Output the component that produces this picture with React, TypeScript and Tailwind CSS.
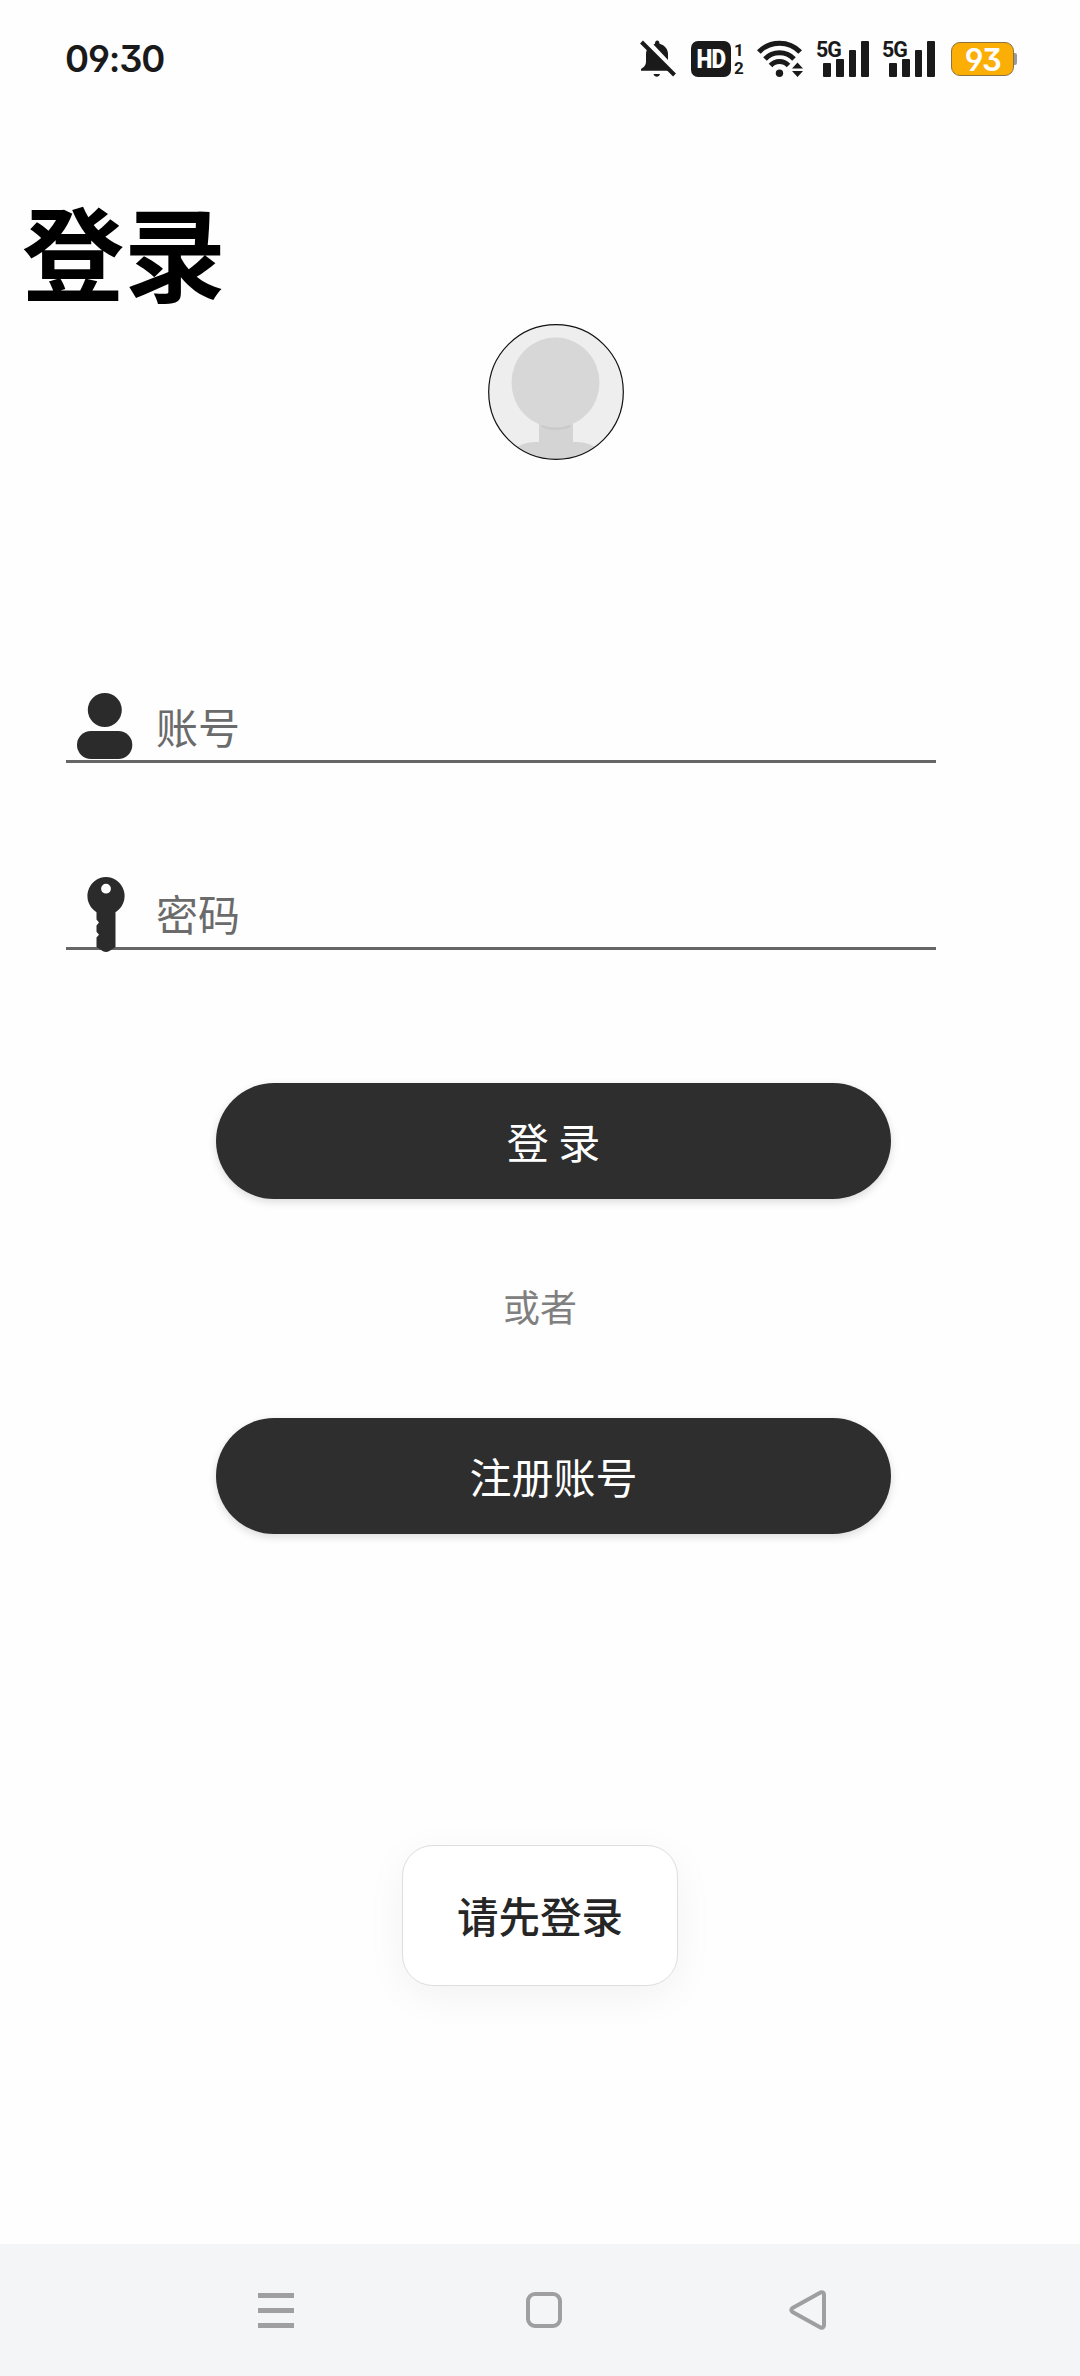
import { useState } from "react";

interface CampoProps {
  type: string;
  placeholder: string;
  className?: string;
  icon: React.ReactNode;
}

function BellOffIcon() {
  return (
    <svg width="38" height="38" viewBox="0 0 38 38" fill="#1a1a1a">
      <path d="M6 14c0-3 1-5 3-7L29 27l3 3v.7H1V29c3-2 5-4 5-7z" />
      <path d="M13.500 4.500c.5-.3 1-.5 1.500-.7C15 1.700 16 .6 17.200.6s2.300 1.100 2.300 3.200C25 5.200 28 9.500 28 14v6z" />
      <path d="M13.500 34h6.500c-.5 1.800-1.700 2.700-3.200 2.700S14 35.800 13.500 34z" />
      <path d="M3.500 0 37 33.500" stroke="#fff" strokeWidth="3" />
      <path d="M1.500 2 34.500 35" stroke="#1a1a1a" strokeWidth="4" />
    </svg>
  );
}

function WifiIcon() {
  return (
    <svg width="46" height="38" viewBox="0 0 46 38" fill="none">
      <g stroke="#1a1a1a" strokeWidth="5">
        <path d="M1.800 12C13 .2 32 .2 43.200 12" />
        <path d="M8 19c8-8.300 21-8.300 29 0" />
        <path d="M13.500 25.500c5-5.300 13-5.300 18 0" />
      </g>
      <circle cx="22.500" cy="33.300" r="3.700" fill="#1a1a1a" />
      <path d="M35 28.500 40.500 22.500l5.500 6zM35 31l5.500 6 5.500-6z" fill="#1a1a1a" />
    </svg>
  );
}

function Signal() {
  return (
    <div className="relative flex h-9 w-[52px] items-end gap-[5px] pl-[6px]">
      <span className="absolute -left-px -top-[3px] origin-left scale-x-95 text-[22.500px] leading-[22px] font-bold tracking-[-1px] font-['Roboto',sans-serif]">
        5G
      </span>
      <div className="h-[14px] w-[8px] shrink-0 rounded-[1px] bg-[#1a1a1a]" />
      <div className="h-[18px] w-[7.500px] shrink-0 rounded-[1px] bg-[#1a1a1a]" />
      <div className="h-[27px] w-[7.500px] shrink-0 rounded-[1px] bg-[#1a1a1a]" />
      <div className="h-[36px] w-[7.500px] shrink-0 rounded-[1px] bg-[#1a1a1a]" />
    </div>
  );
}

function StatusBar() {
  return (
    <div className="flex h-[118px] items-center justify-between pl-[65px] pr-[63px] text-[#1a1a1a]">
      <span className="text-[36.500px] leading-none font-semibold tracking-[-1.200px] font-['Inter',sans-serif] [font-feature-settings:'ss01','cv09']">
        09:30
      </span>
      <div className="flex items-center">
        <BellOffIcon />
        <div className="ml-[13px] flex h-9 w-10 items-center justify-center rounded-[7px] bg-[#1a1a1a] text-[25px] leading-none font-black tracking-[-1px] text-white font-['Roboto',sans-serif]">
          <span className="scale-x-90">HD</span>
        </div>
        <div className="ml-[3px] flex w-[10px] flex-col text-center text-[17px] leading-[18px] font-bold font-['Roboto',sans-serif]">
          <span>1</span>
          <span>2</span>
        </div>
        <div className="ml-[13px]">
          <WifiIcon />
        </div>
        <div className="ml-[14px]">
          <Signal />
        </div>
        <div className="ml-[14px]">
          <Signal />
        </div>
        <div className="ml-[16px] flex h-[34px] w-[63px] items-center justify-center rounded-[9px] border border-[#8a7340] bg-[#fbae06] text-[31px] leading-none font-semibold tracking-[-1.500px] text-white font-['Inter',sans-serif] [font-feature-settings:'ss01','cv09']">
          93
        </div>
        <div className="h-3 w-[3px] rounded-r-[2px] bg-[#9a9a9a]" />
      </div>
    </div>
  );
}

function Avatar() {
  return (
    <svg width="136" height="136" viewBox="0 0 136 136">
      <defs>
        <clipPath id="avatar">
          <circle cx="68" cy="68" r="67.500" />
        </clipPath>
      </defs>
      <g clipPath="url(#avatar)">
        <rect width="136" height="136" fill="#eee" />
        <path d="M51 90h34v28c9 0 16 1 22 5v13H29v-13c6-4 13-5 22-5z" fill="#d4d4d4" />
        <path d="M54 101c8 4 20 4 28 0" stroke="#cacaca" strokeWidth="4" fill="none" />
        <ellipse cx="67.500" cy="58.500" rx="44" ry="45" fill="#d7d7d7" />
      </g>
      <circle cx="68" cy="68" r="67.300" fill="none" stroke="#111" strokeWidth="1.200" />
    </svg>
  );
}

function UserIcon() {
  return (
    <svg width="56" height="67" viewBox="0 0 56 67" fill="#2b2b2b">
      <circle cx="27.800" cy="17" r="17" />
      <rect x="0" y="38" width="55.300" height="28" rx="14" />
    </svg>
  );
}

function KeyIcon() {
  return (
    <svg width="38" height="75" viewBox="0 0 38 75" fill="#2b2b2b">
      <path
        fillRule="evenodd"
        d="M19 0a19 19 0 0 1 9.500 35.200V70L22 74.300q-3 1.200-6 0L9.500 70V60.500l2.500-2.700-2.500-3V48.500l2.500-3-2.500-3V35.200A19 19 0 0 1 19 0zM19 6.800a4.900 4.900 0 1 0 0 9.800 4.900 4.900 0 0 0 0-9.800z"
      />
    </svg>
  );
}

function Campo({ type, placeholder, icon, className }: CampoProps) {
  const [valor, setValor] = useState("");

  return (
    <label className={`relative ml-[66px] flex w-[870px] items-end border-b-3 border-[#666] ${className}`}>
      {icon}
      <input
        type={type}
        value={valor}
        onChange={(e) => setValor(e.target.value)}
        placeholder={placeholder}
        className="ml-[90px] h-[68px] flex-1 bg-transparent pb-[2px] text-[42px] text-[#222] outline-none placeholder:text-[#6b6b6b]"
      />
    </label>
  );
}

const botao =
  "ml-[216px] block h-[116px] w-[675px] rounded-full bg-[#2e2e2e] text-[42px] leading-[116px] text-white shadow-[0_3px_9px_rgba(0,0,0,0.14)]";

export default function App() {
  return (
    <div className="relative flex h-[2376px] w-[1080px] flex-col overflow-hidden bg-[#fefefe] font-['Noto_Sans_CJK_SC',sans-serif]">
      <StatusBar />
      <main className="flex-1">
        <h1 className="mt-[62px] ml-[22px] h-[144px] text-[102px] leading-[139px] font-bold text-black">
          登录
        </h1>
        <div className="ml-[488px] h-[136px]">
          <Avatar />
        </div>

        {/* Campos do formulário */}
        <Campo
          type="text"
          placeholder="账号"
          className="mt-[233px] h-[70px]"
          icon={
            <span className="absolute bottom-0 left-[11px]">
              <UserIcon />
            </span>
          }
        />
        <Campo
          type="password"
          placeholder="密码"
          className="mt-[117px] h-[70px]"
          icon={
            <span className="absolute -bottom-[5px] left-[21px]">
              <KeyIcon />
            </span>
          }
        />

        <button className={`${botao} mt-[133px]`}>登 录</button>
        <p className="mt-[75px] h-[67px] text-center text-[37px] leading-[64px] text-[#808080]">
          或者
        </p>
        <button className={`${botao} mt-[77px]`}>注册账号</button>
      </main>

      {/* Aviso */}
      <div className="absolute left-[402px] top-[1845px] flex h-[141px] w-[276px] items-center justify-center rounded-[31px] border border-[#dedede] bg-white text-[41.500px] font-medium text-[#262626] shadow-[0_10px_40px_rgba(0,0,0,0.05)]">
        请先登录
      </div>

      {/* Barra de navegação */}
      <nav className="flex h-[132px] items-center bg-[#f4f5f7]">
        <div className="ml-[258px] flex w-9 flex-col gap-[10px]">
          <div className="h-[5px] bg-[#9f9fa1]" />
          <div className="h-[5px] bg-[#9f9fa1]" />
          <div className="h-[5px] bg-[#9f9fa1]" />
        </div>
        <div className="ml-[232px] h-9 w-9 rounded-[9px] border-4 border-[#9f9fa1]" />
        <svg className="ml-[227px]" width="38" height="40" viewBox="0 0 38 40" fill="none">
          <path
            d="M3.500 18 31.500 2.500Q35 1.500 35 5V35Q35 38.500 31.500 37.500L3.500 22Q1 20 3.500 18z"
            stroke="#9f9fa1"
            strokeWidth="4"
            strokeLinejoin="round"
          />
        </svg>
      </nav>
    </div>
  );
}
